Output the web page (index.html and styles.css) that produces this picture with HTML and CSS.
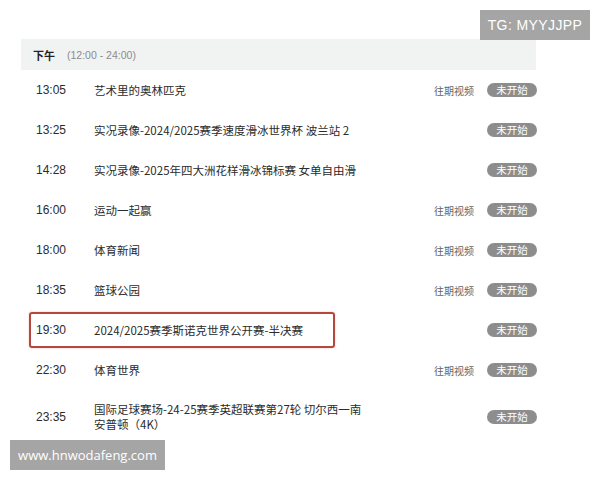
FILE: index.html
```html
<!DOCTYPE html>
<html lang="zh-CN">
<head>
    <meta charset="UTF-8">
    <meta name="viewport" content="width=device-width, initial-scale=1.0">
    <title>节目单</title>
    <link rel="stylesheet" href="styles.css">
</head>
<body>
    <div class="mark mark-tg">TG: MYYJJPP</div>

    <main class="schedule">
        <div class="period">
            <span class="period-name">下午</span>
            <span class="period-range">(12:00 - 24:00)</span>
        </div>

        <ul class="programs">
            <li class="program">
                <span class="time">13:05</span>
                <span class="name">艺术里的奥林匹克</span>
                <a class="replay" href="#">往期视频</a>
                <span class="status">未开始</span>
            </li>
            <li class="program">
                <span class="time">13:25</span>
                <span class="name">实况录像-2024/2025赛季速度滑冰世界杯 波兰站 2</span>
                <span class="status">未开始</span>
            </li>
            <li class="program">
                <span class="time">14:28</span>
                <span class="name">实况录像-2025年四大洲花样滑冰锦标赛 女单自由滑</span>
                <span class="status">未开始</span>
            </li>
            <li class="program">
                <span class="time">16:00</span>
                <span class="name">运动一起赢</span>
                <a class="replay" href="#">往期视频</a>
                <span class="status">未开始</span>
            </li>
            <li class="program">
                <span class="time">18:00</span>
                <span class="name">体育新闻</span>
                <a class="replay" href="#">往期视频</a>
                <span class="status">未开始</span>
            </li>
            <li class="program">
                <span class="time">18:35</span>
                <span class="name">篮球公园</span>
                <a class="replay" href="#">往期视频</a>
                <span class="status">未开始</span>
            </li>
            <li class="program highlight">
                <span class="time">19:30</span>
                <span class="name">2024/2025赛季斯诺克世界公开赛-半决赛</span>
                <span class="status">未开始</span>
            </li>
            <li class="program">
                <span class="time">22:30</span>
                <span class="name">体育世界</span>
                <a class="replay" href="#">往期视频</a>
                <span class="status">未开始</span>
            </li>
            <li class="program tall">
                <span class="time">23:35</span>
                <span class="name">国际足球赛场-24-25赛季英超联赛第27轮 切尔西一南<br>安普顿（4K）</span>
                <span class="status">未开始</span>
            </li>
        </ul>
    </main>

    <div class="mark mark-site">www.hnwodafeng.com</div>
</body>
</html>
```

FILE: styles.css
```css
body {
    margin: 0;
    background-color: #fff;
    color: #333;
    font-family: "Liberation Sans", "Noto Sans CJK SC", sans-serif;
    width: 600px;
    height: 480px;
    overflow: hidden;
    position: relative;
}

.schedule {
    width: 515px;
    margin: 39px 0 0 21px;
}

/* 时段标题 */
.period {
    height: 31px;
    background-color: #f1f2f2;
    display: flex;
    align-items: center;
    padding-left: 12px;
    font-size: 11px;
}

.period-name {
    font-weight: bold;
    color: #222;
    font-family: "Noto Sans CJK SC", sans-serif;
}

.period-range {
    color: #8c8c8c;
    margin-left: 12px;
    font-size: 10.5px;
}

.programs {
    list-style: none;
    margin: 0;
    padding: 0;
}

.program {
    height: 40px;
    display: flex;
    align-items: center;
    padding-left: 15px;
    font-size: 11.5px;
}

.program.tall {
    height: 54px;
}

.time {
    width: 58px;
    flex: none;
    font-size: 12px;
    color: #2b2b2b;
}

.name {
    flex: 1;
    line-height: 15px;
    font-family: "Noto Sans CJK SC", sans-serif;
    font-size: 11.5px;
    color: #2b2b2b;
}

.replay {
    color: #666;
    text-decoration: none;
    font-size: 10px;
    font-family: "Noto Sans CJK SC", sans-serif;
    margin-right: 13px;
}

.status {
    width: 50px;
    height: 14px;
    line-height: 14px;
    border-radius: 7px;
    background-color: #8d8d8d;
    color: #fff;
    text-align: center;
    font-size: 10.5px;
    font-family: "Noto Sans CJK SC", sans-serif;
    margin-right: -1px;
}

/* 红框标注 */
.highlight {
    position: relative;
}

.highlight::after {
    content: "";
    position: absolute;
    left: 8px;
    top: 2px;
    width: 302px;
    height: 32px;
    border: 2px solid #b5473f;
    border-radius: 3px;
    box-shadow: 0 0 2px rgba(220, 120, 100, 0.5);
}

/* 水印 */
.mark {
    position: absolute;
    background-color: #a5a5a5;
    color: #fff;
}

.mark-tg {
    left: 480px;
    top: 10px;
    width: 110px;
    height: 30px;
    line-height: 30px;
    text-align: center;
    font-size: 14px;
    letter-spacing: 0.4px;
    font-family: "Liberation Sans", sans-serif;
}

.mark-site {
    left: 10px;
    top: 440px;
    width: 155px;
    height: 30px;
    line-height: 30px;
    text-align: center;
    font-size: 13px;
    font-family: "Open Sans", sans-serif;
}
```
